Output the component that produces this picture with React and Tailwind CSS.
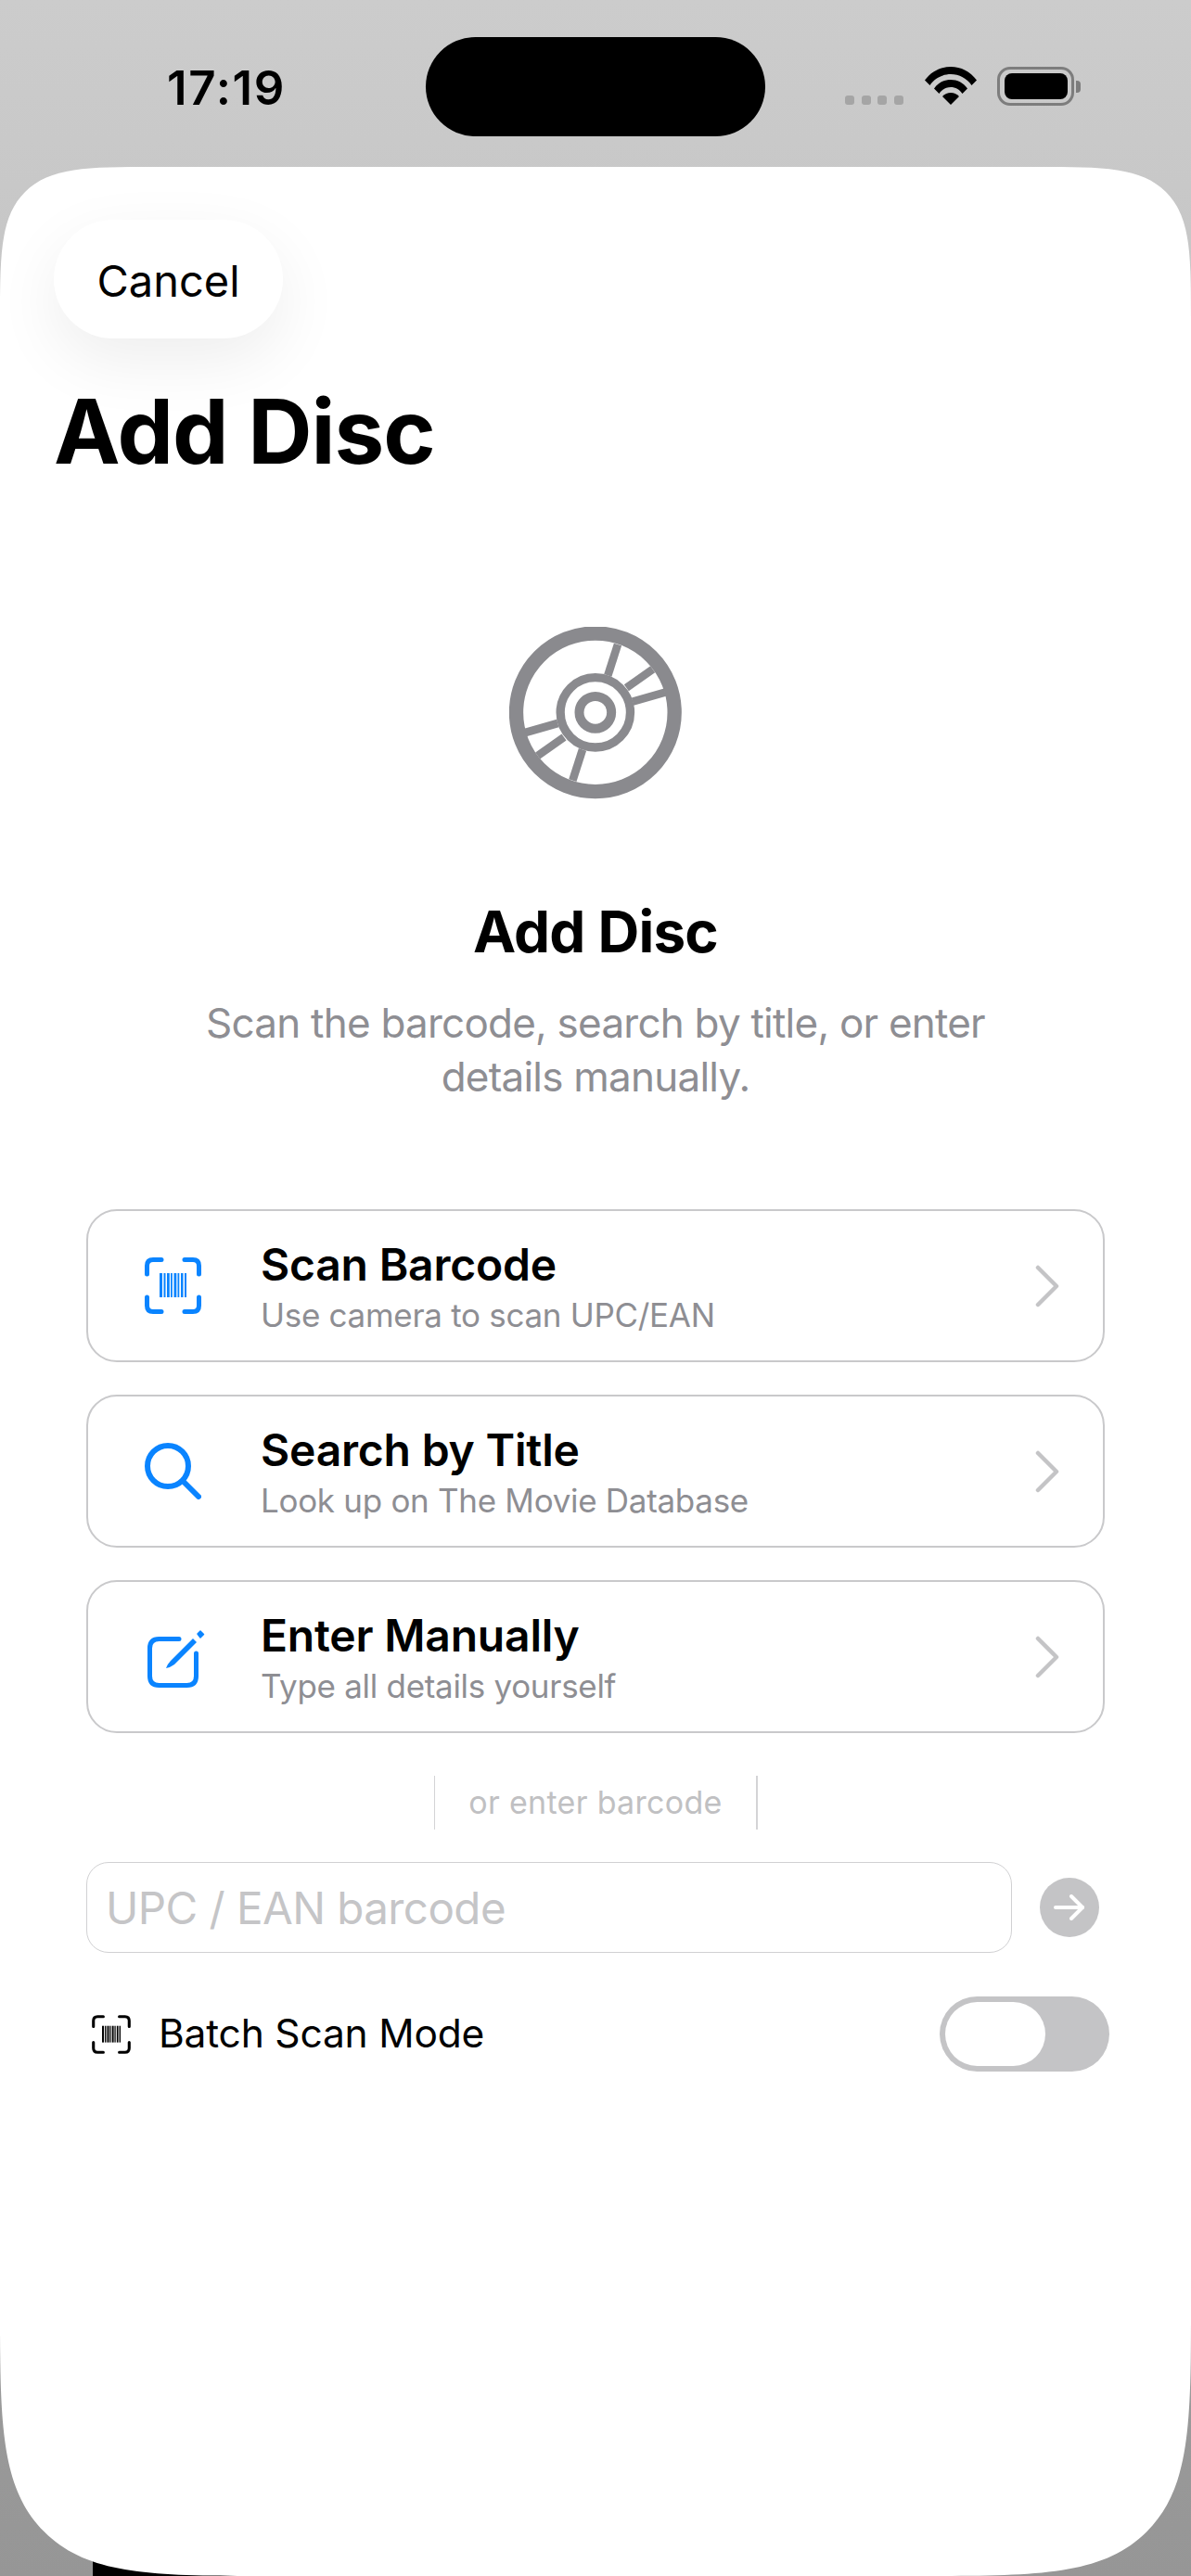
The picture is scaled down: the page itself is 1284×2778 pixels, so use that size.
import React from "react";

const font = { fontFamily: "Inter, 'Liberation Sans', sans-serif" };

function Wifi() {
  return (
    <svg width="56" height="41" viewBox="0 0 56 41" fill="#000">
      <path d="M0 14.5 C7 5 17 0 28 0 C39 0 49 5 56 14.5 L50.5 20 C45.5 12.5 37 8 28 8 C19 8 10.500 12.500 5.500 20 Z" />
      <path d="M10 23.500 C14.500 17 21 14 28 14 C35 14 41.500 17 46 23.500 L40.500 29 C37.500 24.500 33 22 28 22 C23 22 18.500 24.500 15.500 29 Z" />
      <path d="M19 32 C21.500 29.500 24.500 28 28 28 C31.500 28 34.500 29.500 37 32 L28 41 Z" />
    </svg>
  );
}

function Disc() {
  const spokes = [
    [497, 165, 465, 265],
    [610, 245, 525, 305],
    [650, 320, 545, 350],
    [351, 605, 383, 505],
    [238, 525, 323, 465],
    [198, 450, 303, 420],
  ];
  return (
    <svg width="186" height="186" viewBox="146 108 558 558" fill="none" stroke="#8a8a8e">
      <circle cx="424.500" cy="385" r="256" strokeWidth="46" />
      <circle cx="424.500" cy="385" r="113" strokeWidth="28" />
      <circle cx="424.500" cy="385" r="52" strokeWidth="30" />
      {spokes.map(([a, b, c, d], i) => (
        <line key={i} x1={a} y1={b} x2={c} y2={d} strokeWidth="26" />
      ))}
    </svg>
  );
}

function BarcodeFrame({ size, color, stroke }) {
  // drawn on a 61-unit grid: four corner brackets around a row of bars
  const bars = [
    [16, 3], [20.5, 2], [24, 2.8], [28, 1.800], [31.500, 2.8], [35.500, 1.8], [39, 2.500], [43, 2],
  ];
  return (
    <svg width={size} height={size} viewBox="0 0 61 61" fill="none" stroke={color} strokeWidth={stroke} strokeLinecap="round">
      <path d="M2.500 18 V9 Q2.500 2.500 9 2.500 H18" />
      <path d="M43 2.500 H52 Q58.500 2.500 58.500 9 V18" />
      <path d="M2.500 43 V52 Q2.500 58.500 9 58.500 H18" />
      <path d="M43 58.500 H52 Q58.500 58.500 58.500 52 V43" />
      {bars.map(([x, w], i) => (
        <rect key={i} x={x} y="17" width={w} height="26" fill={color} stroke="none" />
      ))}
    </svg>
  );
}

function SearchGlyph() {
  return (
    <svg width="61" height="61" viewBox="0 0 61 61" fill="none" stroke="#0a84ff" strokeWidth="6" strokeLinecap="round">
      <circle cx="25" cy="25" r="22" />
      <path d="M41 41 L58 58" />
    </svg>
  );
}

function EditGlyph() {
  return (
    <svg width="66" height="68" viewBox="0 0 66 68" fill="none" className="shrink-0">
      <path
        d="M37 14.500 H15.500 Q5.500 14.500 5.500 24.500 V54.500 Q5.500 64.500 15.500 64.500 H45.500 Q55.500 64.500 55.500 54.500 V30"
        stroke="#0a84ff"
        strokeWidth="5"
        strokeLinecap="round"
      />
      <path d="M23 46 Q25 41 28 38 L52 14 L56 18 L32 42 Q28 45 23 46 Z" fill="#0a84ff" />
      <path d="M57 9 L60 6 L63.500 9.500 L60 13 Z" fill="#0a84ff" stroke="#0a84ff" strokeWidth="1.500" strokeLinejoin="round" />
    </svg>
  );
}

function Chevron() {
  return (
    <svg width="28" height="46" viewBox="0 0 28 46" fill="none" stroke="#c4c4c6" strokeWidth="4.500" strokeLinecap="round" strokeLinejoin="round">
      <path d="M4 3 L24 23 L4 43" />
    </svg>
  );
}

function OptionCard({ icon, title, subtitle }) {
  return (
    <div className="flex h-[165px] items-center rounded-[33px] border-2 border-[#c9c9cb] pl-[61px] pr-[46px]">
      <div className="flex w-[64px] shrink-0 items-center justify-start">{icon}</div>
      <div className="ml-[61px] flex min-w-0 flex-1 flex-col pt-[3px]">
        <span className="text-[48px] leading-[56px] font-semibold tracking-[-0.2px] text-black">{title}</span>
        <span className="mt-[3px] text-[35px] leading-[46px] tracking-[-0.3px] text-[#8e8e93]">{subtitle}</span>
      </div>
      <Chevron />
    </div>
  );
}

export default function App() {
  return (
    <div className="relative h-[2778px] w-[1284px] overflow-hidden bg-gradient-to-b from-[#cccccc] to-[#969696]" style={font}>
      {/* status bar */}
      <div className="relative h-[180px]">
        <span className="absolute left-[180px] top-[64px] text-[51px] leading-[62px] font-semibold tracking-[1.7px] text-black">17:19</span>
        <div className="absolute left-[459px] top-[40px] h-[107px] w-[366px] rounded-full bg-black" />
        <div className="absolute left-[911px] top-[103px] flex gap-[7.5px]">
          <span className="h-[10px] w-[10px] rounded-[3px] bg-[#a5a5a5]" />
          <span className="h-[10px] w-[10px] rounded-[3px] bg-[#a5a5a5]" />
          <span className="h-[10px] w-[10px] rounded-[3px] bg-[#a5a5a5]" />
          <span className="h-[10px] w-[10px] rounded-[3px] bg-[#a5a5a5]" />
        </div>
        <div className="absolute left-[997px] top-[72px]">
          <Wifi />
        </div>
        <div className="absolute left-[1075px] top-[72px] flex h-[42px] w-[83px] items-center justify-center rounded-[14px] border-[3px] border-[#7d7d7d]">
          <div className="h-[28px] w-[68px] rounded-[8px] bg-black" />
        </div>
        <div className="absolute left-[1160px] top-[87px] h-[13px] w-[5px] rounded-r-[4px] bg-[#7d7d7d]" />
      </div>

      {/* strip of the screen underneath, visible past the sheet's corner */}
      <div className="absolute bottom-0 left-[100px] h-[40px] w-[400px] bg-black" />

      {/* modal sheet */}
      <div className="relative flex h-[2598px] flex-col rounded-t-[170px] rounded-b-[300px] bg-white [corner-shape:squircle]">
        <div className="ml-[58px] mt-[57px] flex h-[128px] w-[247px] items-center justify-center rounded-[64px] bg-white pt-[3px] shadow-[0_24px_70px_rgba(0,0,0,0.07)]">
          <span className="text-[47px] leading-none text-black">Cancel</span>
        </div>
        <h1 className="ml-[58px] mt-[39px] text-[96px] leading-[122px] font-bold tracking-[-1px] text-black">Add Disc</h1>

        <div className="mt-[150px] flex justify-center">
          <Disc />
        </div>
        <h2 className="mt-[103px] text-center text-[62px] leading-[80px] font-bold tracking-[-0.8px] text-black">Add Disc</h2>
        <p className="mt-[29px] text-center text-[44px] leading-[58px] tracking-[-0.77px] text-[#8e8e93]">
          Scan the barcode, search by title, or enter
          <br />
          details manually.
        </p>

        <div className="mx-[93px] mt-[114px] flex flex-col gap-[35px]">
          <OptionCard icon={<BarcodeFrame size={61} color="#0a84ff" stroke={5} />} title="Scan Barcode" subtitle="Use camera to scan UPC/EAN" />
          <OptionCard icon={<SearchGlyph />} title="Search by Title" subtitle="Look up on The Movie Database" />
          <OptionCard icon={<EditGlyph />} title="Enter Manually" subtitle="Type all details yourself" />
        </div>

        <div className="mt-[46px] flex h-[58px] items-center justify-center">
          <span className="h-full w-[1.5px] bg-[#d4d4d6]" />
          <span className="w-[346px] text-center text-[34px] leading-none tracking-[0.3px] text-[#c0c0c2]">or enter barcode</span>
          <span className="h-full w-[1.5px] bg-[#d4d4d6]" />
        </div>

        <div className="ml-[93px] mt-[35px] flex items-center">
          <div className="flex h-[98px] w-[998px] items-center rounded-[24px] border-[1.5px] border-[#d1d1d3] pl-[20px] pt-[2px]">
            <span className="text-[47.5px] leading-none tracking-[-0.55px] text-[#c5c5c7]">UPC / EAN barcode</span>
          </div>
          <div className="ml-[30px] flex h-[64px] w-[64px] items-center justify-center rounded-full bg-[#c4c4c6]">
            <svg width="34" height="28" viewBox="0 0 34 28" fill="none" stroke="#fff" strokeWidth="4" strokeLinecap="round" strokeLinejoin="round">
              <path d="M2 14 H31" />
              <path d="M19 2 L31 14 L19 26" />
            </svg>
          </div>
        </div>

        <div className="ml-[99px] mt-[47px] flex h-[81px] w-[1097px] items-center">
          <BarcodeFrame size={42} color="#000" stroke={4.500} />
          <span className="ml-[30px] flex-1 text-[42.5px] leading-none tracking-[-0.2px] text-black">Batch Scan Mode</span>
          <div className="flex h-[81px] w-[183px] items-center rounded-full bg-[#c4c4c6] pl-[6px]">
            <div className="h-[69px] w-[108px] rounded-full bg-white" />
          </div>
        </div>
      </div>
    </div>
  );
}
